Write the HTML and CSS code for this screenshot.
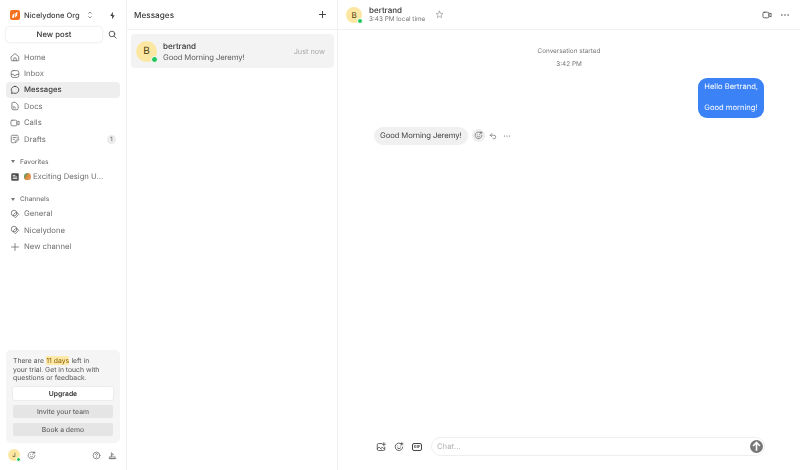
FILE: index.html
```html
<!DOCTYPE html>
<html lang="en">
<head>
    <meta charset="UTF-8">
    <title>Messages</title>
    <link rel="stylesheet" href="styles.css">
</head>
<body>
    <svg class="icon-defs" width="0" height="0">
        <symbol id="i-home" viewBox="0 0 16 16"><path d="M2 7.500 8 2.500l6 5V13a1 1 0 0 1-1 1H3a1 1 0 0 1-1-1zM6 14v-3a2 2 0 0 1 4 0v3"/></symbol>
        <symbol id="i-inbox" viewBox="0 0 16 16"><rect x="2" y="2.500" width="12" height="11" rx="3"/><path d="M2 8.500h3.500a2.500 2 0 0 0 5 0H14"/></symbol>
        <symbol id="i-chat" viewBox="0 0 16 16"><path d="M8 2.200c3.300 0 6 2.400 6 5.600s-2.700 5.600-6 5.600c-1 0-1.900-.2-2.700-.6L2.400 13.600l.7-2.800C2.400 9.900 2 8.900 2 7.800c0-3.200 2.700-5.600 6-5.600z"/></symbol>
        <symbol id="i-doc" viewBox="0 0 16 16"><path d="M3 4a2 2 0 0 1 2-2h3.500L13 6.500V12a2 2 0 0 1-2 2H5a2 2 0 0 1-2-2zM6 11.500a2.500 2.500 0 0 0-1-2M6 8.500a4.500 4.500 0 0 1 3 3"/></symbol>
        <symbol id="i-video" viewBox="0 0 16 16"><rect x="1.500" y="3.500" width="9.500" height="9" rx="2.200"/><path d="M11 6.500l3.500-1.500v6L11 9.500"/></symbol>
        <symbol id="i-draft" viewBox="0 0 16 16"><path d="M13 6V4a2 2 0 0 0-2-2H4a2 2 0 0 0-2 2v8a2 2 0 0 0 2 2h2M5 5.500h5M5 8.500h2M8 13.500l.5-2L13 7l1.500 1.500L10 13z"/></symbol>
        <symbol id="i-tag" viewBox="0 0 16 16"><circle cx="6.500" cy="6.500" r="4.500"/><path d="M6 8.500 8.500 6l3.500.5 2 2-5.500 5.500-2-2z"/></symbol>
        <symbol id="i-plus" viewBox="0 0 16 16"><path d="M8 2.500v11M2.500 8h11"/></symbol>
        <symbol id="i-smile" viewBox="0 0 16 16"><path d="M12 3.200A6 6 0 1 0 14 8M5.500 9.500a3 3 0 0 0 5 0M6 6.500h.01M10 6.500h.01M12.500 1v4M10.500 3h4"/></symbol>
        <symbol id="i-dots" viewBox="0 0 16 16"><circle class="solid" cx="3" cy="8" r="1.200"/><circle class="solid" cx="8" cy="8" r="1.200"/><circle class="solid" cx="13" cy="8" r="1.200"/></symbol>
    </svg>

    <div class="app">
        <aside class="sidebar">
            <div class="org">
                <span class="org-logo"><svg viewBox="0 0 12 12"><path d="M2.500 9.500 3 6l2.500-2.500L5 9zM6 9l.5-5L9 2l-.5 5z"/></svg></span>
                <span class="org-name">Nicelydone Org</span>
                <svg class="chevrons" viewBox="0 0 8 12"><path d="M1.500 4 4 1.500 6.500 4M1.500 8 4 10.500 6.500 8"/></svg>
                <svg class="bolt" viewBox="0 0 12 12"><path d="M6.500 1 3 6.500h2.500L5.500 11 9 5.500H6.500z"/></svg>
            </div>
            <div class="post-row">
                <button class="new-post">New post</button>
                <svg class="icon search" viewBox="0 0 16 16"><circle cx="7" cy="7" r="5"/><path d="M11 11l3.500 3.500"/></svg>
            </div>
            <nav class="nav">
                <a class="nav-item"><svg class="icon"><use href="#i-home"/></svg>Home</a>
                <a class="nav-item"><svg class="icon"><use href="#i-inbox"/></svg>Inbox</a>
                <a class="nav-item active"><svg class="icon"><use href="#i-chat"/></svg>Messages</a>
                <a class="nav-item"><svg class="icon"><use href="#i-doc"/></svg>Docs</a>
                <a class="nav-item"><svg class="icon"><use href="#i-video"/></svg>Calls</a>
                <a class="nav-item"><svg class="icon"><use href="#i-draft"/></svg>Drafts<span class="count">1</span></a>
            </nav>
            <div class="section-label"><span class="caret"></span>Favorites</div>
            <a class="nav-item">
                <svg class="icon fav-icon" viewBox="0 0 16 16"><rect class="solid" x="2" y="2" width="12" height="12" rx="2"/><path class="cut" d="M5 5.500h3M5 8h6M5 10.500h6"/></svg>
                <span class="emoji"></span>Exciting Design U...
            </a>
            <div class="section-label"><span class="caret"></span>Channels</div>
            <a class="nav-item"><svg class="icon"><use href="#i-tag"/></svg>General</a>
            <a class="nav-item"><svg class="icon"><use href="#i-tag"/></svg>Nicelydone</a>
            <a class="nav-item"><svg class="icon"><use href="#i-plus"/></svg>New channel</a>

            <div class="trial">
                <p>There are <mark>11 days</mark> left in<br>your trial. Get in touch with<br>questions or feedback.</p>
                <button class="upgrade">Upgrade</button>
                <button class="muted-btn">Invite your team</button>
                <button class="muted-btn">Book a demo</button>
            </div>
            <div class="side-footer">
                <span class="avatar tiny">J<i class="dot"></i></span>
                <svg class="icon"><use href="#i-smile"/></svg>
                <svg class="icon push" viewBox="0 0 16 16"><circle cx="8" cy="8" r="6"/><path d="M6.300 6.300a1.800 1.800 0 1 1 2.500 1.600c-.5.300-.8.600-.8 1.100M8 11.300h.01"/></svg>
                <svg class="icon" viewBox="0 0 16 16"><path d="M2 13.500h12M3 10.500h10l-1 3H4zM6 10.500V3l4 3.500-4 1"/></svg>
            </div>
        </aside>

        <section class="threads">
            <header class="threads-head">
                <h2>Messages</h2>
                <svg class="icon add"><use href="#i-plus"/></svg>
            </header>
            <div class="thread">
                <span class="avatar big">B<i class="dot"></i></span>
                <div class="thread-text">
                    <strong>bertrand</strong>
                    <span>Good Morning Jeremy!</span>
                </div>
                <time>Just now</time>
            </div>
        </section>

        <main class="chat">
            <header class="chat-head">
                <span class="avatar mid">B<i class="dot"></i></span>
                <div class="who">
                    <strong>bertrand</strong>
                    <span>3:43 PM local time</span>
                </div>
                <svg class="icon star" viewBox="0 0 16 16"><path d="M8 2l1.800 3.900 4.200.5-3.100 2.900.8 4.200L8 11.400l-3.700 2.100.8-4.200L2 6.400l4.200-.5z"/></svg>
                <svg class="icon dark push"><use href="#i-video"/></svg>
                <svg class="icon dark"><use href="#i-dots"/></svg>
            </header>
            <div class="log">
                <div class="started">
                    <span>Conversation started</span>
                    <span>3:42 PM</span>
                </div>
                <div class="bubble-out">
                    <p>Hello Bertrand,</p>
                    <p>Good morning!</p>
                </div>
                <div class="msg-in">
                    <span class="bubble-in">Good Morning Jeremy!</span>
                    <span class="react"><svg class="icon"><use href="#i-smile"/></svg></span>
                    <svg class="icon small" viewBox="0 0 16 16"><path d="M6 3 2.500 6.500 6 10M2.500 6.500H10a3.500 3.500 0 0 1 0 7H8"/></svg>
                    <svg class="icon small more"><use href="#i-dots"/></svg>
                </div>
            </div>
            <footer class="composer">
                <svg class="icon dark" viewBox="0 0 16 16"><path d="M9 2.500H4a2 2 0 0 0-2 2v7a2 2 0 0 0 2 2h8a2 2 0 0 0 2-2V8M2 11l3-3 3.500 3.500M8 10l2-1.500 4 3M12.500 1v5M10 3.500h5"/></svg>
                <svg class="icon dark"><use href="#i-smile"/></svg>
                <span class="gif">GIF</span>
                <div class="chat-input">
                    <span>Chat...</span>
                    <span class="send"><svg viewBox="0 0 12 12"><path d="M6 10V2.500M2.800 5.500 6 2.300l3.200 3.200"/></svg></span>
                </div>
            </footer>
        </main>
    </div>
</body>
</html>
```

FILE: styles.css
```css
* {
    box-sizing: border-box;
}

body {
    margin: 0;
    font-family: Inter, "Noto Sans", sans-serif;
    font-size: 7.700px;
    text-rendering: geometricPrecision;
    color: #3a3a3a;
    background-color: #ffffff;
}

p {
    margin: 0;
}

button {
    font-family: inherit;
    font-size: inherit;
    text-rendering: inherit;
    border: none;
    cursor: pointer;
}

.icon-defs {
    position: absolute;
}

.icon {
    width: 10px;
    height: 10px;
    flex: none;
    fill: none;
    color: #6e6e6e;
    stroke: #6e6e6e;
    stroke-width: 1.300;
    stroke-linecap: round;
    stroke-linejoin: round;
}

.solid {
    fill: currentColor;
    stroke: none;
}

.cut {
    stroke: #ffffff;
}

.icon.dark {
    color: #444;
    stroke: #444;
}

.app {
    display: flex;
    height: 470px;
    overflow: hidden;
    opacity: 0.999; /* keeps text antialiasing grey */
}

/* left sidebar */
.sidebar {
    width: 127px;
    flex: none;
    display: flex;
    flex-direction: column;
    padding: 0 6px;
    border-right: 1px solid #efefef;
}

.org {
    height: 27px;
    padding: 3px 3px 0 4px;
    display: flex;
    align-items: center;
    gap: 4px;
}

.org-logo {
    width: 10px;
    height: 10px;
    border-radius: 2px;
    background-color: #f3701e;
    display: flex;
}

.org-logo svg {
    fill: #ffffff;
}

.org-name {
    font-size: 7.500px;
    font-weight: 500;
    color: #3d3d3d;
}

.chevrons {
    width: 6px;
    height: 8px;
    margin-left: 3px;
    fill: none;
    stroke: #777;
    stroke-width: 1.200;
}

.bolt {
    width: 9px;
    height: 9px;
    margin-left: auto;
    fill: #444;
}

.post-row {
    display: flex;
    align-items: center;
    justify-content: space-between;
    padding-right: 3px;
    margin-bottom: 7px;
}

.new-post {
    width: 96px;
    height: 15px;
    padding: 0;
    background-color: #ffffff;
    border-radius: 4px;
    box-shadow: 0 0 3px rgba(0, 0, 0, 0.16);
    color: #333;
    font-weight: 500;
}

.search {
    width: 9px;
    height: 9px;
    stroke: #444;
    stroke-width: 1.500;
}

.nav {
    display: flex;
    flex-direction: column;
}

.nav-item {
    height: 16.400px;
    padding: 0 4px;
    display: flex;
    align-items: center;
    gap: 4px;
    border-radius: 4px;
    color: #6e6e6e;
}

.nav-item.active {
    background-color: #eeeeee;
    color: #3a3a3a;
    font-weight: 500;
}

.nav-item.active .icon {
    stroke: #3a3a3a;
}

.fav-icon {
    color: #4d4d4d;
}

.count {
    margin-left: auto;
    width: 9px;
    height: 9px;
    border-radius: 50%;
    background-color: #ececec;
    color: #555;
    font-size: 6px;
    display: flex;
    align-items: center;
    justify-content: center;
}

.section-label {
    margin-top: 10px;
    margin-bottom: 2px;
    padding: 0 5px;
    height: 9px;
    display: flex;
    align-items: center;
    gap: 5px;
    font-size: 6.500px;
    font-weight: 500;
    color: #757575;
}

.caret {
    border-left: 2px solid transparent;
    border-right: 2px solid transparent;
    border-top: 3px solid #777;
}

.emoji {
    width: 7px;
    height: 7px;
    margin-right: -2px;
    border-radius: 50% 50% 40% 40%;
    background: linear-gradient(120deg, #5d9a62 20%, #e58b3c 50%, #d9a273);
}

.trial {
    margin-top: auto;
    padding: 7px;
    background-color: #f5f5f5;
    border-radius: 5px;
    display: flex;
    flex-direction: column;
    gap: 5px;
    font-size: 6.800px;
}

.trial p {
    color: #555;
    line-height: 8.700px;
    margin-bottom: -1px;
    white-space: nowrap;
}

.trial mark {
    margin: 0 0.500px;
    background-color: #fdeaa8;
    color: #8a5a00;
    border-radius: 1px;
}

.trial button {
    height: 13px;
    padding: 0;
    border-radius: 2px;
}

.upgrade {
    background-color: #ffffff;
    font-weight: 600;
    color: #333;
    box-shadow: 0 0 2px rgba(0, 0, 0, 0.12);
}

.muted-btn {
    background-color: #e5e5e5;
    color: #666;
    font-weight: 500;
}

.side-footer {
    height: 27px;
    padding: 0 3px 3px 2px;
    display: flex;
    align-items: center;
    gap: 7px;
}

.side-footer .push {
    margin-left: auto;
}

.side-footer .icon {
    width: 9px;
    height: 9px;
}

/* avatars */
.avatar {
    position: relative;
    flex: none;
    border-radius: 50%;
    background-color: #fce7a2;
    color: #4a3b10;
    display: flex;
    align-items: center;
    justify-content: center;
}

.avatar.big {
    width: 21px;
    height: 21px;
    font-size: 10px;
}

.avatar.big .dot {
    width: 7px;
    height: 7px;
}

.avatar.mid {
    width: 16px;
    height: 16px;
    font-size: 8px;
}

.avatar.tiny {
    width: 12px;
    height: 12px;
    font-size: 6px;
}

.dot {
    position: absolute;
    right: -1px;
    bottom: -1px;
    width: 6px;
    height: 6px;
    border-radius: 50%;
    border: 1px solid #ffffff;
    background-color: #22c55e;
}

.avatar.tiny .dot {
    width: 5px;
    height: 5px;
}

/* thread list */
.threads {
    width: 211px;
    flex: none;
    border-right: 1px solid #efefef;
}

.threads-head {
    height: 30px;
    padding: 0 10px 0 7px;
    display: flex;
    align-items: center;
    justify-content: space-between;
    border-bottom: 1px solid #f2f2f2;
}

.threads-head h2 {
    margin: 0;
    font-size: 8.200px;
    font-weight: 500;
    color: #3a3a3a;
}

.add {
    width: 9px;
    height: 9px;
    stroke: #333;
    stroke-width: 1.600;
}

.thread {
    margin: 4px 3px 0 4px;
    height: 34px;
    padding: 0 9px 0 5px;
    display: flex;
    align-items: center;
    gap: 6px;
    background-color: #f3f3f3;
    border-radius: 4px;
}

.thread-text {
    flex: 1;
    padding-top: 2px;
    display: flex;
    flex-direction: column;
    line-height: 11px;
    color: #5c5c5c;
    letter-spacing: -0.100px;
}

.thread-text strong {
    font-size: 8px;
    font-weight: 500;
    color: #333;
    letter-spacing: 0;
}

.thread time {
    font-size: 7.300px;
    color: #aaaaaa;
}

/* conversation */
.chat {
    flex: 1;
    min-width: 0;
    display: flex;
    flex-direction: column;
}

.chat-head {
    height: 30px;
    padding: 0 10px 0 8px;
    display: flex;
    align-items: center;
    gap: 7px;
    border-bottom: 1px solid #f2f2f2;
}

.who {
    display: flex;
    flex-direction: column;
    font-size: 6.400px;
    color: #777;
    line-height: 9px;
}

.who strong {
    font-size: 8px;
    font-weight: 500;
    color: #333;
    line-height: 10px;
}

.star {
    width: 9px;
    height: 9px;
    margin-left: 3px;
    stroke: #8a8a8a;
    stroke-width: 1.100;
}

.chat-head .push {
    margin-left: auto;
    margin-right: 1px;
}

.log {
    flex: 1;
    padding: 17px 36px 0;
    display: flex;
    flex-direction: column;
}

.started {
    display: flex;
    flex-direction: column;
    align-items: center;
    gap: 4px;
    font-size: 6.400px;
    line-height: 9px;
    color: #777;
    margin-bottom: 9px;
}

.bubble-out {
    align-self: flex-end;
    padding: 4px 6px;
    border-radius: 9px;
    background-color: #3b82f6;
    color: #ffffff;
    font-size: 7.600px;
    line-height: 10.500px;
}

.bubble-out p + p {
    margin-top: 10.500px;
}

.msg-in {
    margin-top: 9px;
    display: flex;
    align-items: center;
    gap: 4px;
}

.bubble-in {
    height: 18px;
    padding: 0 6px;
    display: flex;
    align-items: center;
    border-radius: 9px;
    background-color: #f0f0f0;
    color: #444;
    letter-spacing: -0.100px;
}

.react {
    width: 13px;
    height: 13px;
    border-radius: 50%;
    background-color: #eeeeee;
    display: flex;
    align-items: center;
    justify-content: center;
}

.react .icon {
    width: 9px;
    height: 9px;
}

.icon.small {
    width: 8px;
    height: 8px;
    color: #666;
    stroke: #666;
}

.icon.more {
    margin-left: 2px;
}

.composer {
    height: 38px;
    padding: 0 35px 9px 38px;
    display: flex;
    align-items: center;
    gap: 8px;
}

.gif {
    width: 10px;
    height: 8px;
    border: 1px solid #444;
    border-radius: 2px;
    font-size: 4px;
    font-weight: 700;
    color: #444;
    display: flex;
    align-items: center;
    justify-content: center;
}

.chat-input {
    flex: 1;
    height: 19px;
    margin-left: 1px;
    padding: 0 1px 0 5px;
    display: flex;
    align-items: center;
    justify-content: space-between;
    border: 1px solid #eeeeee;
    border-radius: 10px;
    color: #b0b0b0;
}

.send {
    width: 13px;
    height: 13px;
    border-radius: 50%;
    background-color: #777777;
    display: flex;
}

.send svg {
    fill: none;
    stroke: #ffffff;
    stroke-width: 1.500;
}
```
